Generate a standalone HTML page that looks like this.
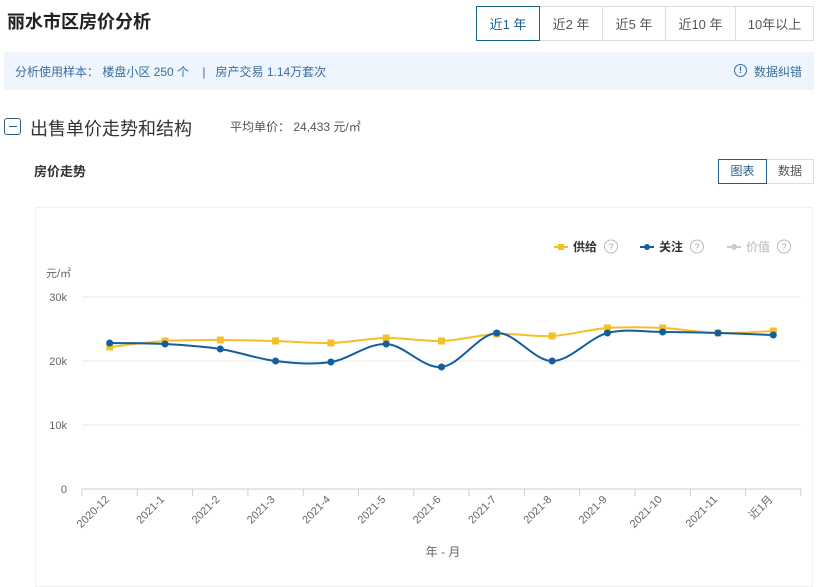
<!DOCTYPE html>
<html><head><meta charset="utf-8"><style>
*{margin:0;padding:0;box-sizing:border-box}
body{width:833px;height:572px;overflow:hidden;background:#fff;font-family:"Liberation Sans","Noto Sans CJK SC",sans-serif;position:relative;color:#333}
.a{position:absolute;white-space:nowrap}
.tabs{position:absolute;left:476px;top:6px;display:flex;height:35px}
.tabs div{border:1px solid #ddd;margin-left:-1px;font-size:13px;color:#555;display:flex;align-items:center;justify-content:center;height:35px}
.tabs .on{border-color:#1d5f8f;color:#1d5f8f;z-index:1}
.bar{position:absolute;left:4px;top:52px;width:810px;height:38px;background:#eef5fc}
</style></head><body>
<div class="a" style="left:7px;top:8px;font-size:18px;font-weight:bold;color:#222">丽水市区房价分析</div>
<div class="tabs"><div class="on" style="width:64px;margin-left:0">近1 年</div><div style="width:64px">近2 年</div><div style="width:64px">近5 年</div><div style="width:71px">近10 年</div><div style="width:79px">10年以上</div></div>
<div class="bar"></div>
<div class="a" style="left:15px;top:63px;font-size:12px;color:#3a6d9e">分析使用样本： 楼盘小区 250 个 &nbsp;&nbsp;&nbsp;| &nbsp;&nbsp;房产交易 1.14万套次</div>
<div class="a" style="left:734px;top:64px;width:13px;height:13px;border:1.3px solid #3a6d9e;border-radius:50%;font-size:9px;color:#3a6d9e;text-align:center;line-height:11px;font-weight:bold">!</div>
<div class="a" style="left:754px;top:63px;font-size:12px;color:#3a6d9e">数据纠错</div>
<div class="a" style="left:4px;top:118px;width:17px;height:17px;border:1.3px solid #2f5f7f;border-radius:3px"><div style="position:absolute;left:3.5px;top:6.5px;width:8px;height:1.3px;background:#2f5f7f"></div></div>
<div class="a" style="left:30px;top:115px;font-size:18px;color:#333">出售单价走势和结构</div>
<div class="a" style="left:230px;top:118px;font-size:12px;color:#555">平均单价： 24,433 元/㎡</div>
<div class="a" style="left:34px;top:161px;font-size:13px;font-weight:bold;color:#333">房价走势</div>
<div class="a" style="left:718px;top:159px;width:49px;height:25px;border:1px solid #1d5f8f;font-size:12px;color:#1d5f8f;text-align:center;line-height:23px;z-index:1">图表</div>
<div class="a" style="left:766px;top:159px;width:48px;height:25px;border:1px solid #ddd;font-size:12px;color:#555;text-align:center;line-height:23px">数据</div>
<div class="a" style="left:35px;top:207px;width:778px;height:380px;border:1px solid #f0f0f0"></div>
<svg class="a" style="left:0;top:0" width="833" height="572" id="s" font-family="Liberation Sans,Noto Sans CJK SC,sans-serif"></svg>
<script>
var s=document.getElementById('s'),h='';
h+='<text x="46" y="277" font-size="11" fill="#666">元/㎡</text>';
[[297,'30k'],[361,'20k'],[425,'10k'],[489,'0']].forEach(function(g){h+='<line x1="82" x2="801" y1="'+g[0]+'" y2="'+g[0]+'" stroke="'+(g[1]=='0'?'#ccc':'#e8e8e8')+'"/><text x="67" y="'+(g[0]+4)+'" font-size="11" fill="#666" text-anchor="end">'+g[1]+'</text>';});
var labs=['2020-12','2021-1','2021-2','2021-3','2021-4','2021-5','2021-6','2021-7','2021-8','2021-9','2021-10','2021-11','近1月'];
for(var i=0;i<=13;i++){var x=82+i*55.3;h+='<line x1="'+x+'" x2="'+x+'" y1="489" y2="496" stroke="#ccc"/>';}
var xs=labs.map(function(l,i){return 109.7+i*55.3;});
labs.forEach(function(l,i){h+='<text transform="translate('+(xs[i])+',500) rotate(-45)" font-size="11" fill="#666" text-anchor="end">'+l+'</text>';});
h+='<text x="443" y="556" font-size="12" fill="#666" text-anchor="middle">年 - 月</text>';
var Y=[347,341,340,341,343,338,341,334,336,328,328,333,331],B=[343,344,349,361,362,344,367,333,361,333,332,333,335];
function path(v){var d='M'+xs[0]+' '+v[0];for(var i=0;i<v.length-1;i++){var p0=i?i-1:i,p3=i+2<v.length?i+2:i+1;var c1x=xs[i]+(xs[i+1]-xs[p0])/6,c1y=v[i]+(v[i+1]-v[p0])/6,c2x=xs[i+1]-(xs[p3]-xs[i])/6,c2y=v[i+1]-(v[p3]-v[i])/6;d+=' C'+c1x+' '+c1y+' '+c2x+' '+c2y+' '+xs[i+1]+' '+v[i+1];}return d;}
h+='<path d="'+path(Y)+'" fill="none" stroke="#f5bf29" stroke-width="2"/>';
Y.forEach(function(v,i){h+='<rect x="'+(xs[i]-3.5)+'" y="'+(v-3.5)+'" width="7" height="7" fill="#f5bf29"/>';});
h+='<path d="'+path(B)+'" fill="none" stroke="#135e9e" stroke-width="2"/>';
B.forEach(function(v,i){h+='<circle cx="'+xs[i]+'" cy="'+v+'" r="3.5" fill="#135e9e"/>';});
function leg(x,c,t,sh,tc){h+='<line x1="'+x+'" x2="'+(x+14)+'" y1="247" y2="247" stroke="'+c+'" stroke-width="2"/>'+(sh?'<rect x="'+(x+4)+'" y="244" width="6" height="6" fill="'+c+'"/>':'<circle cx="'+(x+7)+'" cy="247" r="3" fill="'+c+'"/>')+'<text x="'+(x+19)+'" y="251" font-size="12" font-weight="bold" fill="'+tc+'">'+t+'</text><circle cx="'+(x+57)+'" cy="246.5" r="6.5" fill="none" stroke="#bbb"/><text x="'+(x+57)+'" y="250" font-size="9" fill="#aaa" text-anchor="middle">?</text>';}
leg(554,'#f5bf29','供给',1,'#333');leg(640,'#135e9e','关注',0,'#333');leg(727,'#ccc','价值',0,'#ccc');
s.innerHTML=h;
</script>
</body></html>
